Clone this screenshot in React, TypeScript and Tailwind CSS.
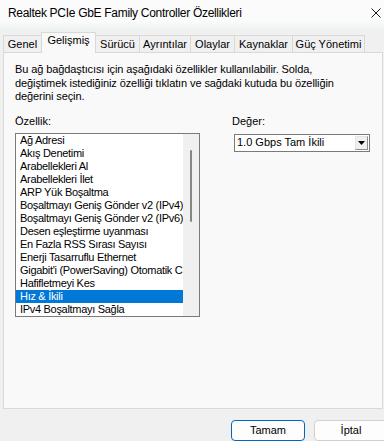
const tabs = [
  { label: "Genel", w: "w-[39px]" },
  { label: "Gelişmiş", w: "w-[55px]", active: true },
  { label: "Sürücü", w: "w-[44px]" },
  { label: "Ayrıntılar", w: "w-[51px]" },
  { label: "Olaylar", w: "w-[44px]" },
  { label: "Kaynaklar", w: "w-[58px]" },
  { label: "Güç Yönetimi", w: "w-[72px]" },
];

const properties = [
  "Ağ Adresi",
  "Akış Denetimi",
  "Arabellekleri Al",
  "Arabellekleri İlet",
  "ARP Yük Boşaltma",
  "Boşaltmayı Geniş Gönder v2 (IPv4)",
  "Boşaltmayı Geniş Gönder v2 (IPv6)",
  "Desen eşleştirme uyanması",
  "En Fazla RSS Sırası Sayısı",
  "Enerji Tasarruflu Ethernet",
  "Gigabit'i (PowerSaving) Otomatik C",
  "Hafifletmeyi Kes",
  "Hız & İkili",
  "IPv4 Boşaltmayı Sağla",
];

const SELECTED = "Hız & İkili";

export default function App() {
  return (
    <div className="w-[384px] h-[441px] bg-[#f0f0f0] flex flex-col overflow-hidden text-black font-['Liberation_Sans',Arial,sans-serif]">
      {/* title bar */}
      <div className="h-[30px] shrink-0 flex items-start justify-between pl-[8px] pr-[2px] pt-[6px] bg-linear-to-b from-[#fbfbfb] from-70% to-[#edf3f1]">
        <span className="text-[12px] leading-[14px] tracking-[-0.3px]">Realtek PCIe GbE Family Controller Özellikleri</span>
        <svg width="10" height="10" viewBox="0 0 10 10" className="mt-[2px] mr-[1px]">
          <path d="M0.5 0.5 L9.5 9.5 M9.5 0.5 L0.5 9.5" stroke="#1a1a1a" strokeWidth="1" fill="none" />
        </svg>
      </div>

      {/* tabs */}
      <div className="h-[22px] shrink-0 flex items-end pl-[3px]">
        {tabs.map((t, i) => (
          <div
            key={t.label}
            className={
              t.active
                ? `${t.w} h-[21px] -mb-px -ml-px relative z-10 flex items-center justify-center pb-[5px] border-t border-l border-r border-[#d9d9d9] bg-[#f9f9f9] text-[11px] leading-[13px] whitespace-nowrap`
                : `${t.w} h-[17px] flex items-center justify-center border-t border-r ${i === 0 ? "border-l" : ""} border-[#d9d9d9] bg-[#f0f0f0] text-[11px] leading-[13px] whitespace-nowrap`
            }
          >
            {t.label}
          </div>
        ))}
      </div>

      {/* tab page */}
      <div className="ml-[3px] w-[380px] h-[357px] shrink-0 border border-[#d9d9d9] bg-[#f9f9f9] pl-[11px] pt-[10px]">
        <p className="text-[11px] leading-[13.5px] tracking-[-0.1px] whitespace-nowrap">
          Bu ağ bağdaştıcısı için aşağıdaki özellikler kullanılabilir. Solda,
          <br />
          değiştimek istediğiniz özelliği tıklatın ve sağdaki kutuda bu özelliğin
          <br />
          değerini seçin.
        </p>

        <div className="flex mt-[11px]">
          <div className="w-[185px] flex flex-col">
            <span className="text-[11px] leading-[13px]">Özellik:</span>
            <div className="mt-[5px] w-[185px] h-[184px] border border-[#7a7a7a] bg-white flex">
              <div className="w-[167px] flex flex-col overflow-hidden">
                {properties.map((p) => (
                  <div
                    key={p}
                    className={`h-[13px] pl-[4px] text-[11px] leading-[13px] tracking-[-0.3px] whitespace-nowrap overflow-hidden ${
                      p === SELECTED ? "bg-[#0078d7] text-white" : ""
                    }`}
                  >
                    {p}
                  </div>
                ))}
              </div>
              <div className="w-[16px] bg-[#f0f0f0] pt-[16px] pl-[7px]">
                <div className="w-[2px] h-[72px] rounded-full bg-[#868686]" />
              </div>
            </div>
          </div>

          <div className="ml-[32px] flex flex-col">
            <span className="text-[11px] leading-[13px]">Değer:</span>
            <div className="mt-[6px] ml-[2px] w-[136px] h-[18px] border border-[#7a7a7a] bg-white flex items-center justify-between pl-[2px] pr-[1px]">
              <span className="text-[11px] leading-[13px] whitespace-nowrap">1.0 Gbps Tam İkili</span>
              <div className="w-[13px] h-[14px] border border-t-[#e3e3e3] border-l-[#e3e3e3] border-r-[#8c8c8c] border-b-[#8c8c8c] bg-[#f0f0f0] flex items-center justify-center">
                <svg width="7" height="4" viewBox="0 0 7 4">
                  <path d="M0 0 H7 L3.5 4 Z" fill="#000" />
                </svg>
              </div>
            </div>
          </div>
        </div>
      </div>

      {/* buttons */}
      <div className="flex gap-[9px] pl-[231px] mt-[11px] shrink-0">
        <button className="w-[74px] h-[21px] shrink-0 rounded-[4px] border border-[#0067c0] bg-[#fdfdfd] text-[11px] leading-[13px]">
          Tamam
        </button>
        <button className="w-[74px] h-[21px] shrink-0 rounded-[4px] border border-[#d0d0d0] bg-[#fdfdfd] text-[11px] leading-[13px]">
          İptal
        </button>
      </div>
    </div>
  );
}
